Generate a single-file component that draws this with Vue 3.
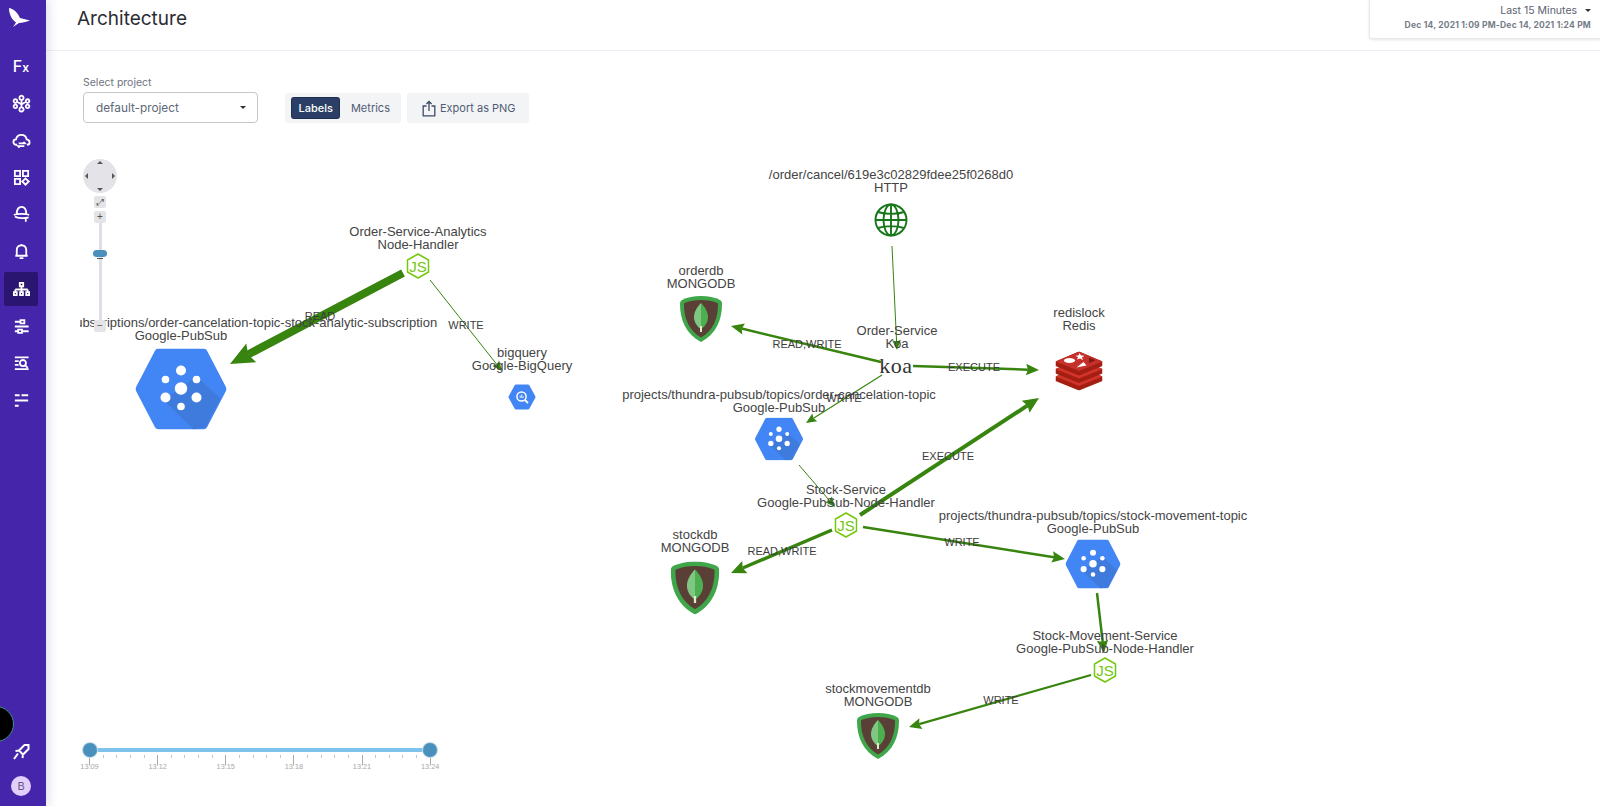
<template>
  <div class="app">
    <aside class="sidebar">
      <div class="logo">
        <svg width="42" height="36" viewBox="0 0 42 36">
          <path d="M9 8C14 9 18 13 20 18L30 20.5C26 22 22 23 19 23L13 27L16 22.5C11 19 9 13 9 8Z" fill="#fff" />
        </svg>
      </div>
      <nav class="nav">
        <div v-for="item in navItems" :key="item.name" class="nav-item" :class="{ active: item.active }">
          <span v-if="item.text" class="fx">F<small>x</small></span>
          <svg v-else width="19" height="19" viewBox="0 0 20 20" fill="none" stroke="#fff" stroke-width="1.9">
            <path :d="item.d" />
          </svg>
        </div>
      </nav>
      <div class="side-bottom">
        <svg width="20" height="20" viewBox="0 0 20 20" fill="none" stroke="#fff" stroke-width="2">
          <path d="M8 8.5L13.5 3H17.5V7L12 12.5ZM8 8.5L4.5 9M12 12.5L11.5 16M7 11.5L3 17" />
        </svg>
        <div class="avatar">B</div>
      </div>
    </aside>

    <!-- widget de chat, cortado pela borda -->
    <div class="chat-bubble"></div>

    <main class="main">
      <header class="topbar">
        <h1 class="title">Architecture</h1>
        <div class="range">
          <div class="range-name">Last 15 Minutes <i class="caret small"></i></div>
          <div class="range-dates">Dec 14, 2021 1:09 PM-Dec 14, 2021 1:24 PM</div>
        </div>
      </header>

      <section class="toolbar">
        <div class="field">
          <label class="field-label">Select project</label>
          <div class="select">default-project <i class="caret"></i></div>
        </div>
        <div class="btn-group">
          <span class="seg on">Labels</span>
          <span class="seg">Metrics</span>
        </div>
        <div class="export">
          <svg width="14" height="17" viewBox="0 0 14 17" fill="none" stroke="#3f4a66" stroke-width="1.3">
            <path d="M4.5 6H1.2V15.8H12.8V6H9.5M7 11V1.5M4.4 4L7 1.5L9.6 4" />
          </svg>
          Export as PNG
        </div>
      </section>

      <section class="graph">
        <svg class="graph-svg" width="1520" height="676" viewBox="80 130 1520 676">
          <defs>
            <symbol id="pubsub" viewBox="0 0 91 81">
              <polygon points="4,40.5 23,4 68,4 87,40.5 68,77 23,77" fill="#4285f4" stroke="#4285f4" stroke-width="8" stroke-linejoin="round" />
              <path d="M61 28L85 50L70 79L58 81L28 52Z" fill="#3f7bdc" />
              <circle cx="45.5" cy="40" r="6.2" fill="#fff" />
              <circle cx="45.5" cy="22" r="5" fill="#fff" />
              <circle cx="30" cy="31" r="3.8" fill="#fff" />
              <circle cx="61" cy="31" r="3.8" fill="#fff" />
              <circle cx="30" cy="49" r="5" fill="#fff" />
              <circle cx="61" cy="49" r="5" fill="#fff" />
              <circle cx="45.5" cy="58" r="3.8" fill="#fff" />
            </symbol>
            <symbol id="bigquery" viewBox="0 0 28 26">
              <polygon points="2,13 8,2 20,2 26,13 20,24 8,24" fill="#4285f4" stroke="#4285f4" stroke-width="3" stroke-linejoin="round" />
              <circle cx="13.5" cy="12.5" r="4.6" fill="none" stroke="#fff" stroke-width="1.5" />
              <path d="M16.8 15.8L20 19" stroke="#fff" stroke-width="1.8" />
              <path d="M12.2 11.5V14M13.7 10.5V14M15 12V14" stroke="#fff" stroke-width=".8" />
            </symbol>
            <symbol id="mongo" viewBox="0 0 42 46">
              <path d="M21 0C28 0 35 1.5 40 4C41.5 5 42 6 42 8C42 24 36 38 21 46C6 38 0 24 0 8C0 6 .5 5 2 4C7 1.5 14 0 21 0Z" fill="#3fa64a" />
              <path d="M21 4C27 4 33 5 37.5 7C38 7.5 38 8 38 9C38 22 33 35 21 41.5C9 35 4 22 4 9C4 8 4 7.5 4.5 7C9 5 15 4 21 4Z" fill="#5a3f37" />
              <path d="M21 7C17 11 14 16 14 21C14 27 18 31 21 33Z" fill="#81c784" />
              <path d="M21 7C25 11 28 16 28 21C28 27 24 31 21 33Z" fill="#4caf50" />
              <path d="M21 30V36" stroke="#dcedc8" stroke-width="2" />
            </symbol>
            <symbol id="redis" viewBox="0 0 47 39">
              <path d="M0 25L23.5 15L47 25V29.5L23.5 39L0 29.5Z" fill="#a41e11" />
              <path d="M0 25L23.5 34.5L47 25L23.5 15Z" fill="#d0342a" />
              <path d="M0 17.5L23.5 7.5L47 17.5V22L23.5 31.5L0 22Z" fill="#a41e11" />
              <path d="M0 17.5L23.5 27L47 17.5L23.5 7.5Z" fill="#d0342a" />
              <path d="M0 10L23.5 0L47 10V14.5L23.5 24L0 14.5Z" fill="#a41e11" />
              <path d="M0 10L23.5 19.5L47 10L23.5 0Z" fill="#c6302b" />
              <ellipse cx="14" cy="9" rx="5.5" ry="2.6" fill="#fff" />
              <path d="M24 1.5L25.5 4L29 4.3L26.5 6L27.5 8.5L24.5 7L21.5 8L22.5 5.8L20 4.2L23 4Z" fill="#fff" />
              <path d="M21 16L31 14L28 10.5Z" fill="#fff" />
              <path d="M33.5 6L40 8.8L33.5 11.5Z" fill="#7a1a12" />
            </symbol>
            <symbol id="nodejs" viewBox="0 0 24 26">
              <polygon points="12,1 22.5,7 22.5,19 12,25 1.5,19 1.5,7" fill="#fff" stroke="#76c80e" stroke-width="1.5" stroke-linejoin="round" />
              <text x="12" y="18.5" text-anchor="middle" class="js-text">JS</text>
            </symbol>
            <symbol id="globe" viewBox="0 0 34 34">
              <g fill="none" stroke="#17761a" stroke-width="1.9">
                <circle cx="17" cy="17" r="15.5" />
                <ellipse cx="17" cy="17" rx="7.5" ry="15.5" />
                <path d="M17 1.5V32.5M1.5 17H32.5M4 9C11 11.5 23 11.5 30 9M4 25C11 22.5 23 22.5 30 25" />
              </g>
            </symbol>
          </defs>

          <g v-for="edge in drawnEdges" :key="edge.id">
            <line :x1="edge.x1" :y1="edge.y1" :x2="edge.bx" :y2="edge.by" stroke="#37840f" :stroke-width="edge.w" />
            <polygon :points="edge.head" fill="#37840f" />
          </g>

          <g v-for="node in nodes" :key="node.id">
            <text v-if="node.icon === 'koa'" :x="node.x" :y="node.y + 6" text-anchor="middle" class="koa">koa</text>
            <use
              v-else
              :href="'#' + node.icon"
              :x="node.x - node.w / 2"
              :y="node.y - node.h / 2"
              :width="node.w"
              :height="node.h"
            />
            <text :x="node.lx" :y="node.ly" text-anchor="middle" class="node-label">{{ node.name }}</text>
            <text :x="node.lx" :y="node.ly + 13" text-anchor="middle" class="node-label">{{ node.kind }}</text>
          </g>

          <text
            v-for="label in edgeLabels"
            :key="label.x"
            :x="label.x"
            :y="label.y"
            text-anchor="middle"
            class="edge-label"
          >{{ label.text }}</text>
        </svg>

        <div class="zoom-ctrl">
          <div class="pan">
            <i class="arr up"></i><i class="arr down"></i><i class="arr left"></i><i class="arr right"></i>
          </div>
          <div class="zoom-btn fit">⤢</div>
          <div class="zoom-btn plus">+</div>
          <div class="zoom-track"><span class="zoom-thumb"></span></div>
          <div class="zoom-btn minus">−</div>
        </div>

        <div class="timeline">
          <div class="tl-bar"><span class="tl-handle"></span><span class="tl-handle"></span></div>
          <div class="tl-ticks">
            <div v-for="tick in ticks" :key="tick.i" class="tick" :class="{ major: tick.label }">
              <span v-if="tick.label" class="tick-label">{{ tick.label }}</span>
            </div>
          </div>
        </div>
      </section>
    </main>
  </div>
</template>

<script setup>
import { computed } from 'vue'

const circ = (x, y, r) => `M${x - r} ${y}a${r} ${r} 0 1 0 ${2 * r} 0a${r} ${r} 0 1 0 ${-2 * r} 0`

const navItems = [
  { name: 'functions', text: true },
  {
    name: 'graph',
    d:
      circ(10, 4, 2.2) + circ(3.6, 7.4, 1.9) + circ(16.4, 7.4, 1.9) + circ(3.6, 13, 1.9) + circ(16.4, 13, 1.9) +
      circ(10, 16.2, 2.2) + 'M10 6.2V14M5.4 8.2L10 11L14.6 8.2',
  },
  {
    name: 'cloud',
    d: 'M5.5 14.5H4.5C2.5 14.5 1.5 13 1.5 11.5C1.5 10 2.7 8.8 4.2 8.8C4.8 5.8 7 4 9.8 4C12.8 4 15 6 15.4 8.8C17.2 9 18.5 10.2 18.5 12C18.5 13.5 17.3 14.5 15.8 14.5M7 13H13.5L12 11.5M13 16H6.5L8 17.5',
  },
  { name: 'apps', d: 'M3 3H8.5V8.5H3ZM11.5 3H17V8.5H11.5ZM3 11.5H8.5V17H3ZM14.2 11L17.6 14.2L14.2 17.6L10.8 14.2Z' },
  { name: 'hat', d: 'M5 9.5C5 5 7 2 10 2C13 2 15 5 15 9.5M2 10.5C5 9 15 9 18 10.5M3 12C6 14 13 14.5 17.5 13M14.5 14V17.5' },
  { name: 'bell', d: 'M5 14.5V8.5C5 5.5 7 3.5 10 3.5C13 3.5 15 5.5 15 8.5V14.5ZM3.5 14.5H16.5M8 17H12M10 2V3.5' },
  {
    name: 'architecture',
    active: true,
    d: 'M8.2 3H11.8V6.6H8.2ZM10 6.6V10M3.5 10H16.5M3.5 10V12.5M10 10V12.5M16.5 10V12.5M2 12.8H5V16H2ZM8.5 12.8H11.5V16H8.5ZM15 12.8H18V16H15Z',
  },
  { name: 'sliders', d: 'M3 5H9M9 3.2H13V6.8H9ZM3 10H17.5M3 15H6.5M6.5 13.2H10.5V16.8H6.5ZM10.5 15H17.5' },
  { name: 'search', d: 'M3 3.5H17.5M3 7.5H7M3 11.5H7M3 16H17.5M14 12L16.5 14.5' + circ(11.5, 9.5, 3.2) },
  { name: 'filter', d: 'M3 4.5H8M10 4.5H17M3 10H17M3 15.5H7' },
]

const P = 'projects/thundra-pubsub'

// lx/ly: rotulo em cima do icone, ly e a baseline da primeira linha
const nodes = [
  { id: 'analytics', icon: 'nodejs', x: 418, y: 266, w: 24, h: 26, lx: 418, ly: 236, name: 'Order-Service-Analytics', kind: 'Node-Handler' },
  { id: 'sub', icon: 'pubsub', x: 181, y: 389, w: 91, h: 81, lx: 181, ly: 327, name: P + '/subscriptions/order-cancelation-topic-stock-analytic-subscription', kind: 'Google-PubSub' },
  { id: 'bq', icon: 'bigquery', x: 522, y: 397, w: 28, h: 26, lx: 522, ly: 357, name: 'bigquery', kind: 'Google-BigQuery' },
  { id: 'http', icon: 'globe', x: 891, y: 220, w: 34, h: 34, lx: 891, ly: 179, name: '/order/cancel/619e3c02829fdee25f0268d0', kind: 'HTTP' },
  { id: 'orderdb', icon: 'mongo', x: 701, y: 319, w: 42, h: 46, lx: 701, ly: 275, name: 'orderdb', kind: 'MONGODB' },
  { id: 'koa', icon: 'koa', x: 896, y: 367, lx: 897, ly: 335, name: 'Order-Service', kind: 'Koa' },
  { id: 'redis', icon: 'redis', x: 1079, y: 371, w: 47, h: 39, lx: 1079, ly: 317, name: 'redislock', kind: 'Redis' },
  { id: 'topic', icon: 'pubsub', x: 779, y: 439, w: 48, h: 43, lx: 779, ly: 399, name: P + '/topics/order-cancelation-topic', kind: 'Google-PubSub' },
  { id: 'stock', icon: 'nodejs', x: 846, y: 525, w: 24, h: 26, lx: 846, ly: 494, name: 'Stock-Service', kind: 'Google-PubSub-Node-Handler' },
  { id: 'stockdb', icon: 'mongo', x: 695, y: 588, w: 49, h: 53, lx: 695, ly: 539, name: 'stockdb', kind: 'MONGODB' },
  { id: 'movetopic', icon: 'pubsub', x: 1093, y: 564, w: 55, h: 49, lx: 1093, ly: 520, name: P + '/topics/stock-movement-topic', kind: 'Google-PubSub' },
  { id: 'move', icon: 'nodejs', x: 1105, y: 670, w: 24, h: 26, lx: 1105, ly: 640, name: 'Stock-Movement-Service', kind: 'Google-PubSub-Node-Handler' },
  { id: 'movedb', icon: 'mongo', x: 878, y: 736, w: 42, h: 46, lx: 878, ly: 693, name: 'stockmovementdb', kind: 'MONGODB' },
]

const edges = [
  [403, 273, 230, 364, 8],
  [430, 280, 502, 371, 1],
  [892, 246, 897, 350, 1],
  [881, 362, 731, 326, 2.5],
  [913, 366, 1039, 370, 2.5],
  [882, 375, 806, 423, 1.2],
  [860, 515, 1039, 398, 4],
  [799, 465, 835, 507, 1],
  [832, 530, 731, 573, 3.5],
  [863, 527, 1065, 559, 2.5],
  [1097, 593, 1104, 653, 2.5],
  [1091, 675, 909, 727, 2.2],
]

const edgeLabels = [
  { text: 'READ', x: 320, y: 320 },
  { text: 'WRITE', x: 466, y: 329 },
  { text: 'READ,WRITE', x: 807, y: 348 },
  { text: 'EXECUTE', x: 974, y: 371 },
  { text: 'WRITE', x: 844, y: 402 },
  { text: 'EXECUTE', x: 948, y: 460 },
  { text: 'READ,WRITE', x: 782, y: 555 },
  { text: 'WRITE', x: 962, y: 546 },
  { text: 'WRITE', x: 1001, y: 704 },
]

// linha + ponta de seta proporcional a espessura
const drawnEdges = computed(() =>
  edges.map(([x1, y1, x2, y2, w], id) => {
    const len = Math.hypot(x2 - x1, y2 - y1)
    const ux = (x2 - x1) / len
    const uy = (y2 - y1) / len
    const headLen = 8 + 2 * w
    const half = 3.5 + 0.9 * w
    const bx = x2 - ux * headLen
    const by = y2 - uy * headLen
    const nx = x2 - ux * headLen * 0.85
    const ny = y2 - uy * headLen * 0.85
    const head = [
      [x2, y2],
      [bx - uy * half, by + ux * half],
      [nx, ny],
      [bx + uy * half, by - ux * half],
    ]
      .map((p) => p.map((v) => v.toFixed(1)).join(','))
      .join(' ')
    return { id, x1, y1, bx: nx, by: ny, w, head }
  })
)

const ticks = Array.from({ length: 26 }, (_, i) => ({
  i,
  label: i % 5 === 0 ? `13:${String(9 + (i / 5) * 3).padStart(2, '0')}` : '',
}))
</script>

<style scoped>
.app {
  display: flex;
  height: 806px;
  overflow: hidden;
  position: relative;
  background: #fff;
  font-family: Inter, 'Liberation Sans', sans-serif;
}

.sidebar {
  flex: 0 0 46px;
  box-sizing: border-box;
  padding-right: 4px;
  display: flex;
  flex-direction: column;
  align-items: center;
  background: #4525a9;
  box-shadow: 2px 0 10px rgba(60, 50, 140, 0.18);
  z-index: 2;
}

.logo {
  height: 49px;
  width: 42px;
}

.logo svg {
  display: block;
}

.nav {
  display: flex;
  flex-direction: column;
  gap: 3.2px;
}

.nav-item {
  width: 34px;
  height: 34px;
  display: flex;
  align-items: center;
  justify-content: center;
  border-radius: 2px;
}

.nav-item.active {
  background: #2a1670;
}

.fx {
  color: #fff;
  font-size: 16px;
  font-weight: 500;
}

.fx small {
  font-size: 12px;
  font-weight: 600;
}

.side-bottom {
  margin-top: auto;
  padding-bottom: 10px;
  display: flex;
  flex-direction: column;
  align-items: center;
  gap: 14px;
}

.avatar {
  width: 20px;
  height: 20px;
  border-radius: 50%;
  background: #e3cffb;
  color: #6b5a86;
  font-size: 11px;
  line-height: 20px;
  text-align: center;
}

.chat-bubble {
  position: absolute;
  left: -22px;
  top: 706px;
  width: 34px;
  height: 34px;
  border-radius: 50%;
  background: #000;
  border: 1px solid #3f8f86;
  z-index: 3;
}

.main {
  flex: 1;
  display: flex;
  flex-direction: column;
  min-width: 0;
}

.topbar {
  height: 50px;
  flex: none;
  display: flex;
  justify-content: space-between;
  align-items: flex-start;
  padding-left: 31px;
  border-bottom: 1px solid #eeeef6;
}

.title {
  margin: 6px 0 0;
  font-size: 19px;
  line-height: 26px;
  font-weight: 400;
  color: #2c2c34;
}

.range {
  width: 231px;
  height: 39px;
  box-sizing: border-box;
  padding: 4px 9px 0 0;
  text-align: right;
  border: 1px solid #e8e8ea;
  border-top: 0;
  border-right: 0;
  border-bottom-left-radius: 3px;
  box-shadow: 0 1px 3px rgba(0, 0, 0, 0.1);
}

.range-name {
  font-size: 10.5px;
  line-height: 14px;
  color: #5a6270;
}

.range-dates {
  margin: 1px 0 0;
  font-size: 8.5px;
  line-height: 13px;
  font-weight: 700;
  letter-spacing: 0.2px;
  color: #747c88;
}

.caret {
  display: inline-block;
  width: 0;
  height: 0;
  border-left: 3.5px solid transparent;
  border-right: 3.5px solid transparent;
  border-top: 3.5px solid #333;
}

.caret.small {
  border-width: 3px 3px 0;
  margin: 0 0 2px 5px;
}

.toolbar {
  height: 79px;
  box-sizing: border-box;
  flex: none;
  display: flex;
  align-items: flex-start;
  padding: 25px 0 0 37px;
}

.field {
  width: 175px;
  margin-right: 27px;
}

.field-label {
  display: block;
  height: 16px;
  font-size: 10.5px;
  line-height: 13px;
  color: #6d7480;
}

.select {
  height: 31px;
  box-sizing: border-box;
  display: flex;
  align-items: center;
  justify-content: space-between;
  padding: 0 11px 0 12px;
  border: 1px solid #c6c6c6;
  border-radius: 4px;
  font-size: 11.8px;
  color: #5d6777;
}

.btn-group,
.export {
  height: 30px;
  margin-top: 17px;
  display: flex;
  align-items: center;
  background: #f3f4f6;
  border-radius: 3px;
  font-size: 11px;
  color: #515c74;
}

.btn-group {
  width: 116px;
  padding-left: 7px;
  box-sizing: border-box;
  margin-right: 6px;
}

.seg {
  height: 20px;
  line-height: 20px;
  padding: 0 6.5px;
  border-radius: 2px;
}

.seg + .seg {
  margin-left: 5px;
}

.seg.on {
  background: #2b3f66;
  box-shadow: 0 0 0 1px #1f2f50;
  color: #fff;
  font-weight: 500;
}

.export {
  width: 122px;
  padding-left: 15px;
  box-sizing: border-box;
  gap: 4px;
}

.graph {
  flex: 1;
  position: relative;
  margin-left: 34px;
  overflow: hidden;
}

.graph-svg {
  display: block;
}

.node-label {
  font: 13px 'Liberation Sans', Arial, sans-serif;
  fill: #444;
}

.edge-label {
  font: 11px 'Liberation Sans', Arial, sans-serif;
  fill: #3c3c3c;
}

.koa {
  font: 22px 'Liberation Serif', serif;
  letter-spacing: 0.5px;
  fill: #333;
}

.js-text {
  font: 15px 'Liberation Sans', Arial, sans-serif;
  fill: #76c80e;
}

.zoom-ctrl {
  position: absolute;
  left: 3px;
  top: 29px;
  width: 34px;
  display: flex;
  flex-direction: column;
  align-items: center;
}

.pan {
  width: 34px;
  height: 34px;
  border-radius: 50%;
  background: #e4e3e8;
  position: relative;
}

.arr {
  position: absolute;
  width: 0;
  height: 0;
  border: 3px solid transparent;
}

.arr.up {
  top: -1px;
  left: 14px;
  border-bottom-color: #555;
}

.arr.down {
  bottom: -1px;
  left: 14px;
  border-top-color: #555;
}

.arr.left {
  left: -1px;
  top: 14px;
  border-right-color: #555;
}

.arr.right {
  right: -1px;
  top: 14px;
  border-left-color: #555;
}

.zoom-btn {
  width: 12px;
  height: 12px;
  border-radius: 2px;
  background: #e4e3e8;
  color: #555;
  font-size: 10px;
  line-height: 12px;
  text-align: center;
  font-family: 'Liberation Sans', sans-serif;
}

.fit {
  margin-top: 3px;
  font-size: 9px;
}

.plus {
  margin-top: 3px;
}

.zoom-track {
  width: 3px;
  height: 97px;
  background: #dfdee6;
  position: relative;
}

.zoom-thumb {
  position: absolute;
  left: -6px;
  top: 27px;
  width: 14px;
  height: 7px;
  border-radius: 4px;
  background: #4a90bc;
}

.zoom-thumb::after {
  content: '';
  position: absolute;
  left: 4px;
  top: 8px;
  width: 6px;
  height: 1px;
  background: #555;
}

.timeline {
  position: absolute;
  left: 9px;
  top: 618px;
  width: 342px;
}

.tl-bar {
  height: 4px;
  margin: 0 1px;
  background: #7fc3ec;
  display: flex;
  justify-content: space-between;
  align-items: center;
  position: relative;
  z-index: 1;
}

.tl-handle {
  width: 14px;
  height: 14px;
  margin: 0 -7px;
  border-radius: 50%;
  background: #4a90bc;
  box-shadow: 0 0 0 1px #c7dbe8;
}

.tl-ticks {
  display: flex;
  justify-content: space-between;
  margin-top: 3px;
}

.tick {
  width: 1px;
  height: 3px;
  background: #c4c4c4;
  position: relative;
}

.tick.major {
  height: 10px;
  background: #aaa;
}

.tick-label {
  position: absolute;
  top: 7px;
  left: -9px;
  width: 19px;
  text-align: center;
  font: 7.3px 'Liberation Sans', Arial, sans-serif;
  color: #a8a8a8;
}
</style>

<style>
html,
body {
  overflow: hidden;
}
</style>
